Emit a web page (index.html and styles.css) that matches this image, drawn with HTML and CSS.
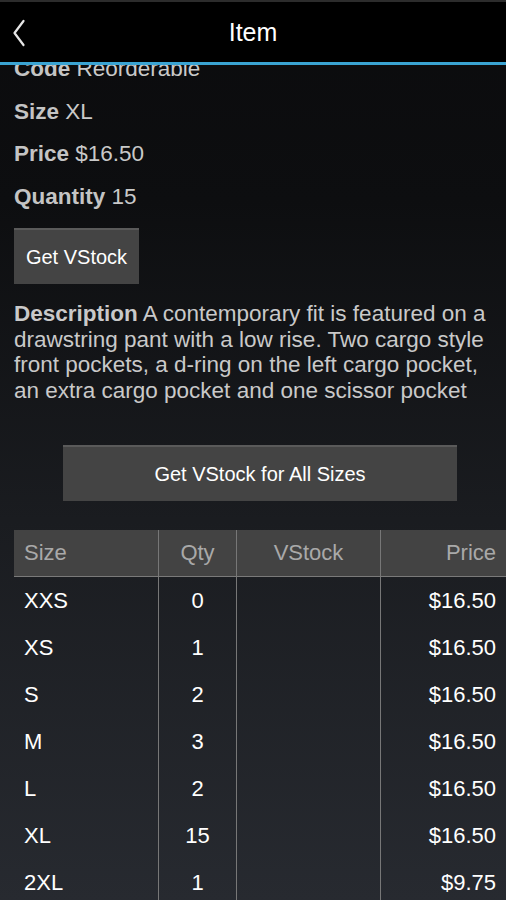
FILE: index.html
```html
<!DOCTYPE html>
<html>
<head>
<meta charset="utf-8">
<link rel="stylesheet" href="styles.css">
</head>
<body>
<div class="screen">
  <header class="topbar">
    <span class="back">
      <svg width="14" height="28" viewBox="0 0 14 28"><path d="M11.5 2 L2.5 14 L11.5 26" fill="none" stroke="#e6e6e6" stroke-width="2.2" stroke-linecap="round" stroke-linejoin="round"/></svg>
    </span>
    <h1 class="title">Item</h1>
  </header>
  <main class="content">
    <div class="inner">
      <p class="field first"><b>Code</b> Reorderable</p>
      <p class="field"><b>Size</b> XL</p>
      <p class="field"><b>Price</b> $16.50</p>
      <p class="field"><b>Quantity</b> 15</p>
      <button class="btn small">Get VStock</button>
      <p class="desc"><b>Description</b> A contemporary fit is featured on a drawstring pant with a low rise. Two cargo style front pockets, a d-ring on the left cargo pocket, an extra cargo pocket and one scissor pocket</p>
      <div class="allwrap"><button class="btn wide">Get VStock for All Sizes</button></div>
      <table class="grid">
        <thead>
          <tr><th class="c-size">Size</th><th class="c-qty">Qty</th><th class="c-vs">VStock</th><th class="c-price">Price</th></tr>
        </thead>
        <tbody>
          <tr><td class="c-size">XXS</td><td class="c-qty">0</td><td class="c-vs"></td><td class="c-price">$16.50</td></tr>
          <tr><td class="c-size">XS</td><td class="c-qty">1</td><td class="c-vs"></td><td class="c-price">$16.50</td></tr>
          <tr><td class="c-size">S</td><td class="c-qty">2</td><td class="c-vs"></td><td class="c-price">$16.50</td></tr>
          <tr><td class="c-size">M</td><td class="c-qty">3</td><td class="c-vs"></td><td class="c-price">$16.50</td></tr>
          <tr><td class="c-size">L</td><td class="c-qty">2</td><td class="c-vs"></td><td class="c-price">$16.50</td></tr>
          <tr><td class="c-size">XL</td><td class="c-qty">15</td><td class="c-vs"></td><td class="c-price">$16.50</td></tr>
          <tr><td class="c-size">2XL</td><td class="c-qty">1</td><td class="c-vs"></td><td class="c-price">$9.75</td></tr>
          <tr><td class="c-size">3XL</td><td class="c-qty">0</td><td class="c-vs"></td><td class="c-price">$9.75</td></tr>
        </tbody>
      </table>
    </div>
  </main>
</div>
</body>
</html>
```

FILE: styles.css
```css
html, body {
  margin: 0;
  padding: 0;
}
body {
  font-family: "Liberation Sans", Arial, sans-serif;
  background: #0c0c0e;
}
.screen {
  width: 506px;
  height: 900px;
  overflow: hidden;
  display: flex;
  flex-direction: column;
  background: linear-gradient(to bottom, #0b0b0d 0px, #0d0e10 200px, #1a1c20 520px, #272a30 900px);
}
.topbar {
  flex: 0 0 auto;
  height: 60px;
  background: #000;
  border-top: 2px solid #2c2c2c;
  border-bottom: 3px solid #3aa3d2;
  display: flex;
  align-items: center;
  justify-content: center;
  position: relative;
}
.back {
  position: absolute;
  left: 12px;
  top: 17px;
  display: flex;
}
.title {
  margin: 0;
  font-size: 25px;
  font-weight: normal;
  color: #fff;
}
.content {
  flex: 1 1 auto;
  overflow: hidden;
}
.inner {
  padding-left: 14px;
  margin-top: -17px;
}
.field {
  margin: 0;
  height: 42.5px;
  line-height: 42.5px;
  font-size: 22.5px;
  color: #c9c9c9;
}
.field b {
  color: #c4c4c4;
}
.btn {
  font-family: "Liberation Sans", Arial, sans-serif;
  font-size: 20px;
  color: #fff;
  background: #444;
  border: 0;
  border-top: 2px solid #5a5a5a;
  padding: 0;
  height: 56px;
  display: block;
}
.btn.small {
  width: 125px;
  margin-top: 10px;
}
.desc {
  margin: 17px 10px 0 0;
  font-size: 22.5px;
  line-height: 25.6px;
  color: #c9c9c9;
}
.allwrap {
  display: flex;
  justify-content: center;
  margin-top: 42px;
}
.btn.wide {
  width: 394px;
}
.grid {
  margin-top: 29px;
  border-collapse: collapse;
  table-layout: fixed;
  width: 492px;
  font-size: 22px;
}
.grid th {
  height: 46px;
  background: #434343;
  color: #a9a9a9;
  font-weight: normal;
  border-bottom: 1px solid #7a7a7a;
  padding: 0 10px;
}
.grid td {
  height: 47px;
  color: #fff;
  padding: 0 10px;
}
.grid th + th, .grid td + td {
  border-left: 1px solid #777;
}
.c-size { width: 124px; text-align: left; }
.c-qty { width: 57px; text-align: center; }
.c-vs { width: 123px; text-align: center; }
.c-price { text-align: right; }
```
